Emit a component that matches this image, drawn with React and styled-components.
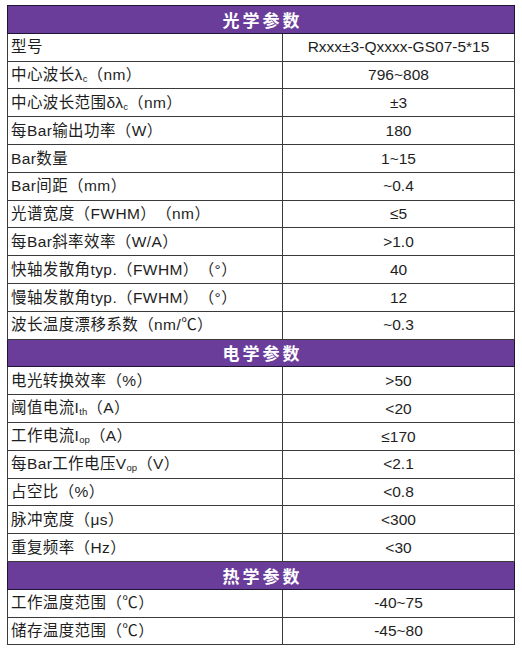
import React from 'react'
import styled, { createGlobalStyle } from 'styled-components'

const GlobalStyle = createGlobalStyle`
  html, body {
    margin: 0;
    padding: 0;
    background: #ffffff;
  }
`

const Page = styled.div`
  padding: 5px 0 0 7px;
  font-family: 'Liberation Sans', Arial, 'Noto Sans CJK SC', sans-serif;
  color: #1e1e1e;
`

const Table = styled.table`
  border-collapse: collapse;
  width: 508px;
  table-layout: fixed;
  border: 1.5px solid #2a2a2a;
`

const Row = styled.tr`
  height: 27.8px;
`

const HeaderCell = styled.th`
  background: #6a3d9b;
  color: #ffffff;
  font-size: 17px;
  font-weight: bold;
  letter-spacing: 3px;
  text-align: center;
  padding: 0 0 0 3px;
  border: 1.5px solid #1e1530;
  font-family: 'Noto Sans CJK SC', sans-serif;
`

const LabelCell = styled.td`
  font-size: 15.5px;
  letter-spacing: 0.4px;
  text-spacing-trim: space-all;
  padding: 0 0 0 3px;
  border: 1px solid #3a3a3a;
  white-space: nowrap;
  line-height: 1;
`

const ValueCell = styled.td`
  font-size: 15.5px;
  text-align: center;
  padding: 0;
  border: 1px solid #3a3a3a;
  white-space: nowrap;
  line-height: 1;
`

const Sub = styled.sub`
  font-size: 9.5px;
  vertical-align: -2px;
  letter-spacing: 0;
`

const sections = [
  {
    title: '光学参数',
    rows: [
      ['型号', 'Rxxx±3-Qxxxx-GS07-5*15'],
      [<>中心波长λ<Sub>c</Sub>（nm）</>, '796~808'],
      [<>中心波长范围δλ<Sub>c</Sub>（nm）</>, '±3'],
      ['每Bar输出功率（W）', '180'],
      ['Bar数量', '1~15'],
      ['Bar间距（mm）', '~0.4'],
      ['光谱宽度（FWHM）（nm）', '≤5'],
      ['每Bar斜率效率（W/A）', '>1.0'],
      ['快轴发散角typ.（FWHM）（°）', '40'],
      ['慢轴发散角typ.（FWHM）（°）', '12'],
      ['波长温度漂移系数（nm/℃）', '~0.3']
    ]
  },
  {
    title: '电学参数',
    rows: [
      ['电光转换效率（%）', '>50'],
      [<>阈值电流I<Sub>th</Sub>（A）</>, '<20'],
      [<>工作电流I<Sub>op</Sub>（A）</>, '≤170'],
      [<>每Bar工作电压V<Sub>op</Sub>（V）</>, '<2.1'],
      ['占空比（%）', '<0.8'],
      ['脉冲宽度（μs）', '<300'],
      ['重复频率（Hz）', '<30']
    ]
  },
  {
    title: '热学参数',
    rows: [
      ['工作温度范围（℃）', '-40~75'],
      ['储存温度范围（℃）', '-45~80']
    ]
  }
]

export default function App() {
  return (
    <Page>
      <GlobalStyle />
      <Table>
        <colgroup>
          <col style={{ width: 275 }} />
          <col />
        </colgroup>
        <tbody>
          {sections.map((section) => (
            <React.Fragment key={section.title}>
              <Row>
                <HeaderCell colSpan={2}>{section.title}</HeaderCell>
              </Row>
              {section.rows.map((row, i) => (
                <Row key={i}>
                  <LabelCell>{row[0]}</LabelCell>
                  <ValueCell>{row[1]}</ValueCell>
                </Row>
              ))}
            </React.Fragment>
          ))}
        </tbody>
      </Table>
    </Page>
  )
}
